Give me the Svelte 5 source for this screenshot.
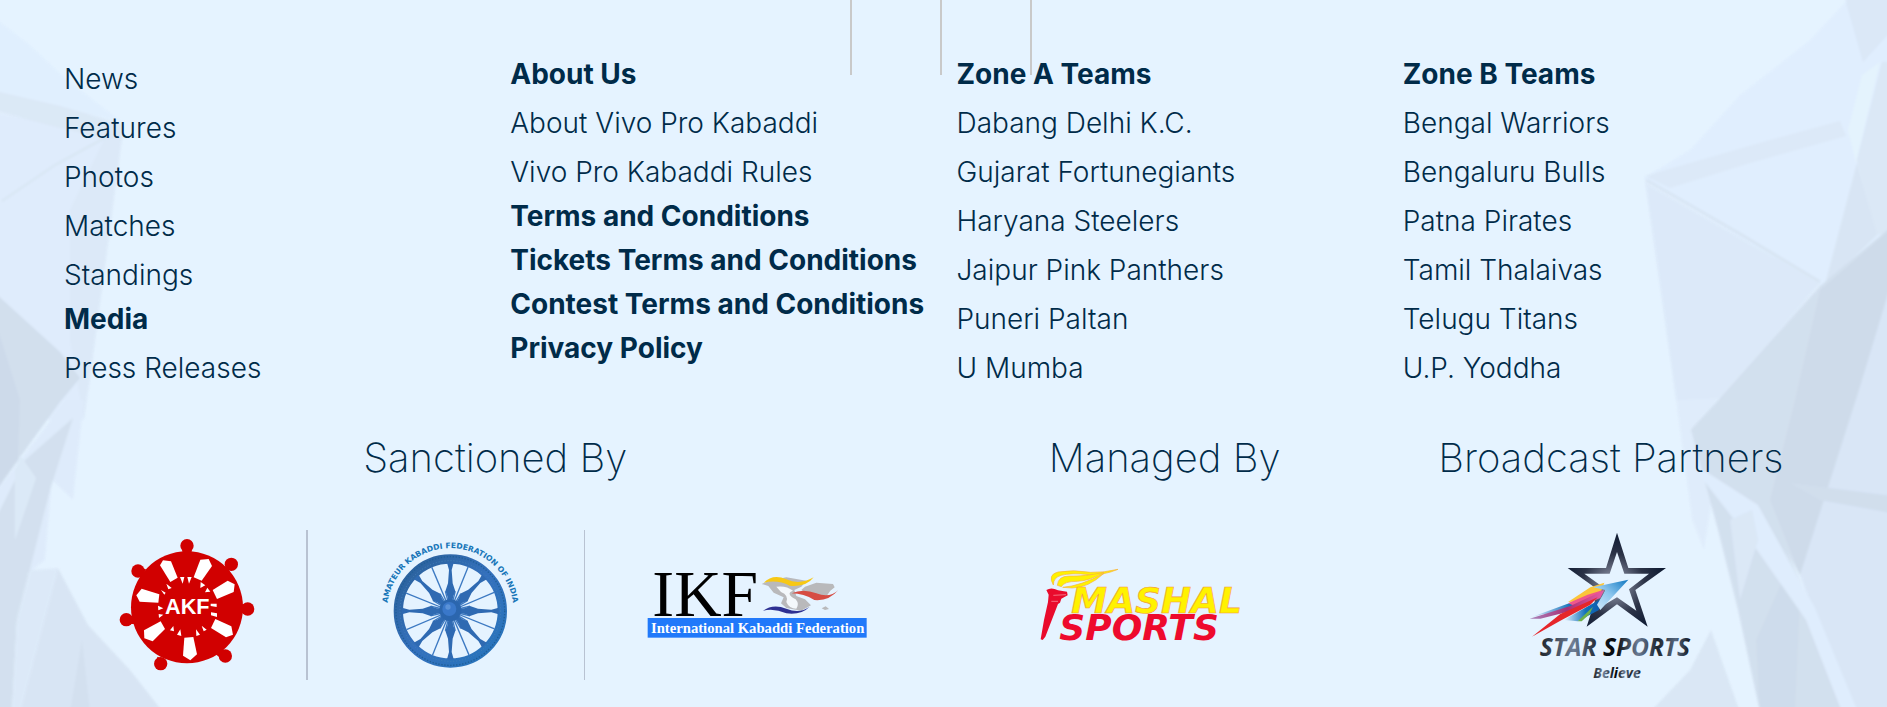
<script>
  const columns = [
    [
      { label: 'News' },
      { label: 'Features' },
      { label: 'Photos' },
      { label: 'Matches' },
      { label: 'Standings' },
      { label: 'Media', strong: true },
      { label: 'Press Releases' }
    ],
    [
      { label: 'About Us', strong: true },
      { label: 'About Vivo Pro Kabaddi' },
      { label: 'Vivo Pro Kabaddi Rules' },
      { label: 'Terms and Conditions', strong: true },
      { label: 'Tickets Terms and Conditions', strong: true },
      { label: 'Contest Terms and Conditions', strong: true },
      { label: 'Privacy Policy', strong: true }
    ],
    [
      { label: 'Zone A Teams', strong: true },
      { label: 'Dabang Delhi K.C.' },
      { label: 'Gujarat Fortunegiants' },
      { label: 'Haryana Steelers' },
      { label: 'Jaipur Pink Panthers' },
      { label: 'Puneri Paltan' },
      { label: 'U Mumba' }
    ],
    [
      { label: 'Zone B Teams', strong: true },
      { label: 'Bengal Warriors' },
      { label: 'Bengaluru Bulls' },
      { label: 'Patna Pirates' },
      { label: 'Tamil Thalaivas' },
      { label: 'Telugu Titans' },
      { label: 'U.P. Yoddha' }
    ]
  ];

  const spokes = [0, 45, 90, 135, 180, 225, 270, 315];
</script>

<footer>
  <svg class="facets left" width="200" height="707" viewBox="0 0 200 707" aria-hidden="true">
    <path d="M-5 18L30 45 65 78 122 122 -5 95Z" fill="#e0effe" />
    <path d="M-5 112L122 138 84 420 -5 420Z" fill="#dfecfc" />
    <path d="M-5 91L60 106 122 124 122 142 60 128 -5 111Z" fill="#dbe8f6" />
    <path d="M122 140L105 138 70 210 70 340 84 420 90 380Z" fill="#dce9f8" />
    <path d="M2 201L55 165 110 135" fill="none" stroke="#d8e5f3" stroke-width="2" />
    <path d="M-5 293L60 352 80 378 60 402 -5 492Z" fill="#d0ddec" />
    <path d="M-5 320L20 400 18 460 -5 492Z" fill="#cbd8e8" />
    <path d="M84 400L73 500 52 480 45 560 -5 600 -5 492 66 400Z" fill="#deebfb" />
    <path d="M73 418L50 490 17 620 12 712 -5 712 -5 520 25 460Z" fill="#d2dfee" />
    <path d="M20 455L36 478 15 540 15 470Z" fill="#dbe9f7" />
    <path d="M58 568L88 625 130 670 163 712 20 712Z" fill="#d7e4f3" />
    <path d="M30 570L58 568 20 712 12 712 17 620Z" fill="#dce9f8" />
    <path d="M82 640L90 712 70 712Z" fill="#d2dfee" />
  </svg>

  <svg class="facets right" width="247" height="707" viewBox="1640 0 247 707" aria-hidden="true">
    <path d="M1852 -5L1810 40 1740 95 1690 150 1643 178 1820 286 1892 230 1892 -5Z" fill="#e0eefe" />
    <path d="M1844 -5L1892 -5 1892 30 1863 62Z" fill="#dae7f7" />
    <path d="M1862 75L1880 62 1856 163 1848 130Z" fill="#e4f3fd" />
    <path d="M1882 62L1892 62 1892 232 1876 235 1857 160Z" fill="#dae7f6" />
    <path d="M1645 176L1770 140 1840 121 1846 136 1750 163 1670 188Z" fill="#dce9f8" />
    <path d="M1645 182L1820 284 1722 400 1676 400Z" fill="#dce9f9" />
    <path d="M1646 180L1740 234 1820 282" fill="none" stroke="#d7e4f3" stroke-width="3" />
    <path d="M1857 163L1877 235 1825 285Z" fill="#d7e4f3" />
    <path d="M1892 226L1820 286 1722 396 1690 430 1750 490 1800 575 1892 480Z" fill="#d1deed" />
    <path d="M1820 290L1892 228 1892 290 1852 410 1800 575 1770 500 1795 400Z" fill="#ccd9e8" />
    <path d="M1892 280L1856 400 1800 575 1850 712 1892 712Z" fill="#d8e5f6" />
    <path d="M1676 400L1720 398 1691 429 1712 500 1704 550 1692 520Z" fill="#dfecfb" />
    <path d="M1691 430L1755 485 1800 580 1850 712 1760 712 1738 610 1718 530Z" fill="#d1deed" />
    <path d="M1784 577L1800 600 1795 712 1760 712 1756 640Z" fill="#ccdaea" />
    <path d="M1697 472L1705 471 1758 505 1815 608 1858 712 1842 712 1806 620 1750 540Z" fill="#dfedfd" />
    <path d="M1730 520L1752 510 1758 540 1740 600Z" fill="#dae7f6" />
    <path d="M1790 483L1892 496 1892 513 1820 500Z" fill="#cfdceb" />
    <path d="M1650 712L1690 670 1711 630 1740 712Z" fill="#d9e6f4" />
  </svg>

  <div class="rules" aria-hidden="true"><span></span><span></span><span></span></div>

  <nav aria-label="Footer">
    {#each columns as items}
      <ul>
        {#each items as item}
          <li class:strong={item.strong}><a href="#top">{item.label}</a></li>
        {/each}
      </ul>
    {/each}
  </nav>

  <div class="partners">
    <section>
      <h2>Sanctioned By</h2>
      <div class="logos trio">
        <a href="#akf" aria-label="AKF">
          <svg width="135" height="150" viewBox="60 30 405 450">
            <g fill="#d10000">
              <circle cx="261" cy="262" r="168" />
              <circle cx="261" cy="77" r="20" />
              <circle cx="394" cy="133" r="20" />
              <circle cx="443" cy="267" r="20" />
              <circle cx="376" cy="408" r="20" />
              <circle cx="182" cy="431" r="20" />
              <circle cx="79" cy="299" r="20" />
              <circle cx="114" cy="153" r="20" />
              <path d="M247 85h28v20h-28zM372 140l18 14-20 20-14-14zM420 253h18v26h-18zM346 402l20-18 20 24-14 14zM172 410l20 8 0 20-22-8zM84 288l20 0 2 24-22 0zM116 140l22 8-14 24-14-12z" />
            </g>
            <g fill="#fff">
              <path d="M180 136L189 121 213 124 233 173 211 186Z" />
              <path d="M301 119L326 117 336 138 305 182 281 172Z" />
              <path d="M338 210L383 182 404 193 401 216 351 237Z" />
              <path d="M346 297L394 319 399 344 378 352 333 324Z" />
              <path d="M253 353L280 351 291 403 271 421 249 407Z" />
              <path d="M182 304L195 327 158 364 133 355 132 331Z" />
              <path d="M109 226L125 206 178 223 175 248 119 245Z" />
              <path d="M240 171h13l-5 20zM262 171h13l-8 20zM302 186l14 10-15 8zM322 203l9 12-16 2zM332 251h18v10l-18-3zM333 277l18 3v11l-18-5zM305 317l15 12-9 5zM288 328l12 16-11 4zM241 328l3 20-13-4zM220 318l2 16-12-3zM174 257l16 8-15 6zM176 282l14 2-13 10zM183 210l14 8-4 6zM199 191l16 13-10 4z" />
            </g>
            <text x="262" y="283" text-anchor="middle" class="akf">AKF</text>
          </svg>
        </a>
        <a href="#akfi" aria-label="Amateur Kabaddi Federation of India">
          <svg width="140" height="150" viewBox="60 30 420 450">
            <defs>
              <linearGradient id="wheel" x1="0" y1="0" x2="1" y2="1">
                <stop offset="0" stop-color="#2a5f96" />
                <stop offset=".5" stop-color="#3470bd" />
                <stop offset="1" stop-color="#2675bb" />
              </linearGradient>
              <path id="arc" d="M82 294A190 190 0 1 1 460 294" />
            </defs>
            <circle cx="271" cy="273" r="156" fill="none" stroke="url(#wheel)" stroke-width="28" />
            <circle cx="271" cy="273" r="163" fill="none" stroke="#1f5f98" stroke-width="4" stroke-dasharray="4 5" />
            <circle cx="271" cy="273" r="151" fill="none" stroke="#4482b8" stroke-width="3" stroke-dasharray="3 6" />
            {#each spokes as angle}
              <path d="M271 273V130" stroke="#3c79c2" stroke-width="4" transform="rotate({angle + 22} 271 273)" />
              <path d="M271 245V212" stroke="#3c79c2" stroke-width="4" transform="rotate({angle + 14} 271 273)" />
              <path d="M271 245V212" stroke="#3c79c2" stroke-width="4" transform="rotate({angle + 31} 271 273)" />
              <path d="M266 250L262 228 256 214 264 190 267 150 261 128 281 128 275 150 278 190 286 214 280 228 276 250Z" fill="#2f6ab2" transform="rotate({angle} 271 273)" />
            {/each}
            <circle cx="271" cy="271" r="33" fill="#2b66ae" />
            <circle cx="268" cy="267" r="21" fill="#3a78ca" />
            <circle cx="264" cy="261" r="8" fill="#5b92d8" />
            <text class="ring"><textPath href="#arc" startOffset="50%" text-anchor="middle">AMATEUR KABADDI FEDERATION OF INDIA</textPath></text>
          </svg>
        </a>
        <a href="#ikf" aria-label="International Kabaddi Federation">
          <svg width="220" height="150" viewBox="82 -30 660 450">
            <text x="98" y="227" class="ikf">IKF</text>
            <g fill="#b9b9bb">
              <path d="M426 132L450 122 500 112 560 122 545 140 524 150 530 168 556 178 574 196 545 212 500 204 484 190 492 172 462 158 446 138Z" />
              <path d="M556 140L590 128 640 132 645 142 632 152 618 172 596 176 560 160 545 150Z" />
              <path d="M606 205L618 199 628 207 616 210Z" />
            </g>
            <path d="M470 140Q500 136 520 152 496 160 528 178 540 192 530 206 508 206 500 186 508 166 484 156Z" fill="#f4f8fb" />
            <path d="M432 128Q460 100 500 118T582 112Q560 142 510 137 474 118 432 128Z" fill="#f7c815" />
            <path d="M516 160Q550 144 590 160T656 150Q628 184 584 180 552 160 516 160Z" fill="#d64c43" />
            <path d="M430 212Q460 190 500 206T570 200Q544 226 500 220 464 204 430 212Z" fill="#2d3092" />
            <rect x="84" y="234" width="657" height="59" fill="#2179fa" />
            <text x="414" y="279" text-anchor="middle" class="ikf-name">International Kabaddi Federation</text>
          </svg>
        </a>
      </div>
    </section>

    <section>
      <h2>Managed By</h2>
      <div class="logos">
        <a href="#mashal" aria-label="Mashal Sports">
          <svg width="250" height="150" viewBox="58 -30 750 450">
            <g fill="#fff200" stroke="#f7b23c" stroke-width="2">
              <path d="M98 135Q80 104 112 96 160 88 210 97 250 98 292 88 250 106 206 104 150 98 122 106 98 112 98 135Z" />
              <path d="M110 136Q112 108 146 108 190 110 250 97 210 122 170 124 130 124 122 140Z" />
              <path d="M126 142Q180 138 250 100 202 144 154 144Z" />
            </g>
            <path d="M77 150Q92 140 112 151L139 155 141 166 122 176 118 188 112 192 74 290 66 300 60 298 70 240 82 186 84 164Z" fill="#e90a2c" />
            <path d="M98 166L136 164M92 184L112 184" stroke="#f7a0ab" stroke-width="2" />
            <text x="152" y="219" class="mashal">MASHAL</text>
            <text x="116" y="301" class="sports">SPORTS</text>
          </svg>
        </a>
      </div>
    </section>

    <section>
      <h2>Broadcast Partners</h2>
      <div class="logos">
        <a href="#star" aria-label="Star Sports">
          <svg width="164" height="150" viewBox="86 60 492 450">
            <defs>
              <radialGradient id="star" gradientUnits="userSpaceOnUse" cx="340" cy="225" r="155">
                <stop offset=".2" stop-color="#7a8093" />
                <stop offset=".6" stop-color="#2c3347" />
                <stop offset="1" stop-color="#0f1b33" />
              </radialGradient>
              <linearGradient id="tip" x1="0" y1="1" x2="1" y2="0">
                <stop offset="0" stop-color="#d7ecfb" />
                <stop offset=".5" stop-color="#8cc6ee" />
                <stop offset="1" stop-color="#0e76c0" />
              </linearGradient>
              <linearGradient id="blue">
                <stop offset="0" stop-color="#1371ba" stop-opacity="0" />
                <stop offset=".6" stop-color="#1371ba" />
                <stop offset="1" stop-color="#0d5cae" />
              </linearGradient>
              <linearGradient id="plum">
                <stop offset="0" stop-color="#a985bd" />
                <stop offset=".5" stop-color="#a92f74" />
                <stop offset="1" stop-color="#ea5ca5" />
              </linearGradient>
              <linearGradient id="steel">
                <stop offset="0" stop-color="#1c222b" />
                <stop offset=".22" stop-color="#6e7f97" />
                <stop offset=".42" stop-color="#10141b" />
                <stop offset=".5" stop-color="#05070a" />
                <stop offset=".65" stop-color="#6a7c96" />
                <stop offset=".78" stop-color="#1e2630" />
                <stop offset=".9" stop-color="#56677f" />
                <stop offset="1" stop-color="#0c1016" />
              </linearGradient>
            </defs>
            <path fill-rule="evenodd" fill="url(#star)" d="M350 68L384 174 497 174 405 240 442 350 350 283 259 350 294 240 202 174 317 174ZM350 126L328 191 252 191 317 238 290 298 350 262 408 302 386 238 446 191 372 191Z" />
            <path d="M92 322L200 282 290 250 270 276 180 310 130 312Z" fill="url(#blue)" />
            <path d="M190 330L300 268 296 300 232 334Z" fill="url(#blue)" />
            <path d="M203 276L270 232 312 218 300 250 240 274Z" fill="#fbc53a" />
            <path d="M203 280L262 254 308 240 280 266 224 288Z" fill="#f0568b" />
            <path d="M232 334L278 290 268 312 244 334Z" fill="#6fb04b" />
            <path d="M278 232L384 209 300 300 290 284 316 240Z" fill="url(#tip)" />
            <path d="M88 326L210 288 312 240 300 264 200 306 120 326Z" fill="url(#plum)" />
            <path d="M95 380L180 312 292 262 270 284 180 332Z" fill="#e6262a" />
            <text x="344" y="438" text-anchor="middle" class="star-name" fill="url(#steel)">STAR SPORTS</text>
            <text x="350" y="503" text-anchor="middle" class="believe" fill="url(#steel)">Believe</text>
          </svg>
        </a>
      </div>
    </section>
  </div>
</footer>

<style>
  :global(body) {
    margin: 0;
    background: #e5f3ff;
  }

  footer {
    position: relative;
    overflow: hidden;
    padding: 52px 53px 27px 49px;
    background: #e5f3ff;
    color: #002b49;
    font-family: Inter, "Open Sans", sans-serif;
  }

  .facets {
    position: absolute;
    top: 0;
    overflow: visible;
    opacity: 0.9;
    filter: blur(1px);
  }

  .left {
    left: 0;
  }

  .right {
    right: 0;
  }

  .rules {
    position: absolute;
    top: 0;
    left: calc(50% - 94px);
    display: flex;
    gap: 88px;
  }

  .rules span {
    width: 2px;
    height: 75px;
    background: #c9c9c9;
  }

  nav {
    position: relative;
    display: grid;
    grid-template-columns: repeat(4, minmax(0, 1fr));
  }

  ul {
    margin: 0;
    padding: 0 0 0 15px;
    list-style: none;
  }

  li {
    padding-top: 5px;
    font-size: 28px;
    font-weight: 300;
    line-height: 44px;
    white-space: nowrap;
  }

  li.strong {
    padding-top: 0;
    font-weight: 700;
  }

  a {
    color: inherit;
    text-decoration: none;
  }

  .partners {
    position: relative;
    display: grid;
    grid-template-columns: 2fr 1fr 1fr;
    margin-top: 44px;
  }

  h2 {
    margin: 0 0 48px;
    font-size: 40px;
    font-weight: 200;
    line-height: 48px;
    text-align: center;
    white-space: nowrap;
  }

  .logos {
    display: flex;
    justify-content: center;
  }

  .logos a {
    display: flex;
    justify-content: center;
  }

  .logos svg {
    overflow: visible;
  }

  .trio {
    display: grid;
    grid-template-columns: 259fr 277fr 357fr;
  }

  .trio a {
    border-right: 2px solid #b8c2d2;
    padding-left: 20px;
  }

  .trio a:nth-child(2) {
    border-right-width: 1px;
    padding-left: 8px;
  }

  .trio a:last-child {
    border-right: 0;
    padding: 0 13px 0 0;
  }

  .akf {
    font: bold 65px "Liberation Sans", sans-serif;
    fill: #fff;
  }

  .ring {
    font: bold 23px "DejaVu Sans", sans-serif;
    fill: #1675b8;
  }

  .ikf {
    font: 197px "Liberation Serif", serif;
    fill: #000;
  }

  .ikf-name {
    font: bold 44px "Liberation Serif", serif;
    fill: #fff;
  }

  .mashal {
    font: italic bold 108px "DejaVu Sans", sans-serif;
    fill: #fff200;
    stroke: #f49a3c;
    stroke-width: 2px;
  }

  .sports {
    font: italic bold 108px "DejaVu Sans", sans-serif;
    fill: #ee0a2d;
  }

  .star-name {
    font: italic bold 74px "Open Sans", sans-serif;
  }

  .believe {
    font: italic bold 42px "Open Sans", sans-serif;
  }
</style>
